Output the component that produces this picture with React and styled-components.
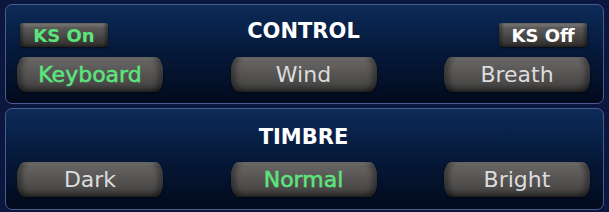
import React from "react";
import styled, { createGlobalStyle } from "styled-components";

const Global = createGlobalStyle`
  html, body { margin: 0; padding: 0; background: #0b173f; }
  body { width: 609px; height: 212px; overflow: hidden; }
`;

const Page = styled.div`
  display: flex;
  flex-direction: column;
  gap: 4px;
  padding: 4px 5px 0 5px;
`;

const Panel = styled.section`
  box-sizing: border-box;
  height: ${(p) => p.$h}px;
  border: 1px solid #4b5a8c;
  border-radius: 7px;
  background: linear-gradient(180deg, #0c2b58 0%, #061a3c 45%, #020a1c 100%);
  display: flex;
  flex-direction: column;
  gap: ${(p) => p.$gap}px;
  padding: ${(p) => p.$pad};
`;

const Header = styled.div`
  display: grid;
  grid-template-columns: 1fr auto 1fr;
  align-items: center;
  height: ${(p) => p.$h}px;
  padding: 0 16px 0 14px;
`;

const Title = styled.div`
  grid-column: 2;
  font-family: "DejaVu Sans", sans-serif;
  font-weight: 700;
  font-size: 21px;
  color: #ffffff;
  text-align: center;
  transform: translateY(${(p) => p.$shift || 0}px);
`;

const SmallButton = styled.div`
  grid-row: 1;
  grid-column: ${(p) => (p.$side === "start" ? 1 : 3)};
  justify-self: ${(p) => p.$side};
  width: 88px;
  height: 24px;
  box-sizing: border-box;
  border-radius: 3px;
  display: flex;
  align-items: center;
  justify-content: center;
  font-family: "DejaVu Sans", sans-serif;
  font-weight: 700;
  font-size: 18px;
  color: ${(p) => (p.$on ? "#5ae57c" : "#ffffff")};
  background: linear-gradient(180deg, #8c8b89 0%, #5e5c5a 18%, #4a4846 55%, #2c2b2a 100%);
  box-shadow: inset 3px 0 3px rgba(0, 0, 0, 0.35), inset -3px 0 3px rgba(0, 0, 0, 0.35), 0 1px 2px rgba(0,0,0,0.6);
`;

const Row = styled.div`
  display: flex;
  justify-content: space-between;
  padding: 0 13px 0 11px;
`;

const Pill = styled.div`
  width: 146px;
  height: 35px;
  box-sizing: border-box;
  border-radius: 8px / 14px;
  display: flex;
  align-items: center;
  justify-content: center;
  font-family: "DejaVu Sans", sans-serif;
  font-weight: 400;
  font-size: 22px;
  color: ${(p) => (p.$on ? "#5de57d" : "#dcdcdc")};
  -webkit-text-stroke: ${(p) => (p.$on ? "0.5px #5de57d" : "0")};
  background: linear-gradient(180deg, #8f8e8c 0%, #666463 12%, #575655 45%, #4a4948 75%, #2f2e2e 100%);
  box-shadow: inset 5px 0 5px rgba(0, 0, 0, 0.35), inset -5px 0 5px rgba(0, 0, 0, 0.35), 0 1px 2px rgba(0,0,0,0.6);
`;

export default function App() {
  return (
    <>
      <Global />
      <Page>
        <Panel $h={100} $pad="18px 0 0 0" $gap={10}>
          <Header $h={24}>
            <SmallButton $side="start" $on>KS On</SmallButton>
            <Title $shift={-4}>CONTROL</Title>
            <SmallButton $side="end">KS Off</SmallButton>
          </Header>
          <Row>
            <Pill $on>Keyboard</Pill>
            <Pill>Wind</Pill>
            <Pill>Breath</Pill>
          </Row>
        </Panel>
        <Panel $h={102} $pad="14px 0 0 0" $gap={11}>
          <Header $h={28}>
            <Title>TIMBRE</Title>
          </Header>
          <Row>
            <Pill>Dark</Pill>
            <Pill $on>Normal</Pill>
            <Pill>Bright</Pill>
          </Row>
        </Panel>
      </Page>
    </>
  );
}
